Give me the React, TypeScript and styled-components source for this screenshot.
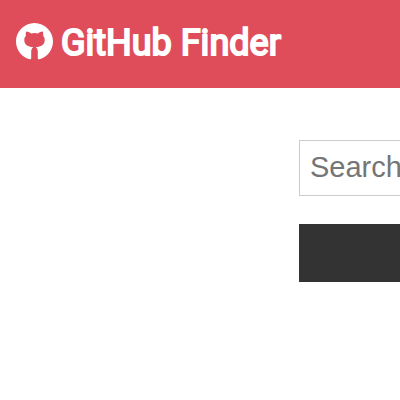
import React, { useState } from 'react';
import styled, { createGlobalStyle } from 'styled-components';

const GlobalStyle = createGlobalStyle`
  * { box-sizing: border-box; margin: 0; padding: 0; }
  body {
    font-family: Roboto, "Liberation Sans", sans-serif;
    background: #fff;
    color: #333;
  }
`;

const Navbar = styled.nav`
  display: flex;
  align-items: center;
  height: 88px;
  padding: 0 16px;
  background: #df4c5a;
  color: #fff;
`;

const Brand = styled.h1`
  display: flex;
  align-items: flex-start;
  gap: 8px;
  padding-bottom: 2px;
  font-size: 36px;
  line-height: 40px;
  font-weight: 400;
  -webkit-text-stroke: 2px currentColor;
  white-space: nowrap;
`;

const Logo = styled.svg`
  display: block;
  width: 37px;
  height: 37px;
  flex: none;
`;

const Container = styled.main`
  padding: 52px 0 0 299px;
  overflow: hidden;
`;

const Form = styled.form`
  display: grid;
  gap: 28px;
  min-width: 480px;
`;

const SearchInput = styled.input`
  width: 100%;
  height: 56px;
  padding: 0 10px 2px;
  border: 1px solid #ccc;
  border-radius: 0;
  font: 29px/36px "Liberation Sans", Arial, sans-serif;
  &::placeholder { color: #757575; opacity: 1; }
`;

const SubmitButton = styled.button`
  width: 100%;
  height: 58px;
  border: 0;
  background: #333;
  color: #fff;
  cursor: pointer;
`;

export default function App() {
  const [query, setQuery] = useState('');
  return (
    <>
      <GlobalStyle />
      <Navbar>
        <Brand>
          <Logo viewBox="0 0 37 37" aria-hidden="true">
            <path
              fill="currentColor"
              d="M18.500 0C8.300 0 0 8.300 0 18.500c0 8.500 5.700 15.600 13.500 17.800.9.200 1.700-.3 1.700-1.200v-6.600c0-1.800.8-3.200 2-4.500-5.400-.2-8.900-2.200-8.900-7.100 0-1.700.6-3.100 1.600-4.200-.3-1.400-.2-2.900.4-4.200 1.800.1 3.400.9 4.800 1.900a17 17 0 0 1 6.800 0c1.400-1 3-1.800 4.800-1.900.6 1.300.7 2.800.4 4.200 1 1.100 1.600 2.500 1.600 4.200 0 4.900-3.500 6.900-8.900 7.100 1.200 1.300 2 2.700 2 4.500v6.600c0 .9.800 1.400 1.700 1.200C31.300 34.100 37 27 37 18.500 37 8.300 28.700 0 18.500 0Z"
            />
          </Logo>
          <span>GitHub Finder</span>
        </Brand>
      </Navbar>
      <Container>
        <Form onSubmit={(e) => e.preventDefault()}>
          <SearchInput
            type="text"
            aria-label="Search"
            placeholder="Search"
            value={query}
            onChange={(e) => setQuery(e.target.value)}
          />
          <SubmitButton type="submit" aria-label="Submit search" />
        </Form>
      </Container>
    </>
  );
}
